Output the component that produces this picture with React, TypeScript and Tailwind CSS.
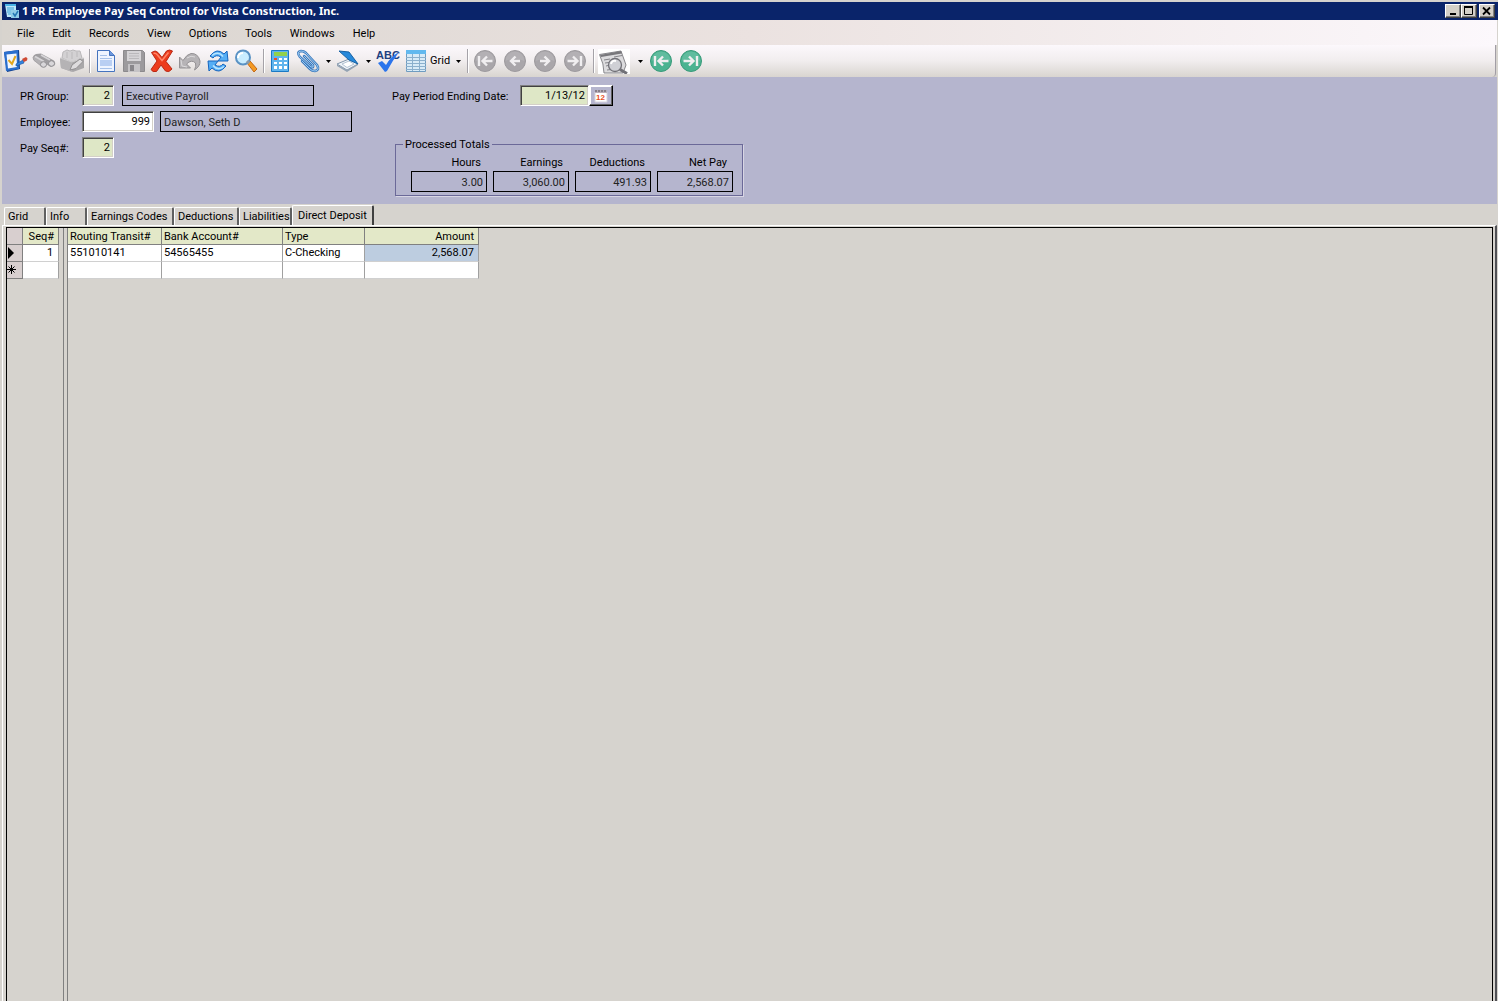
import type { ReactNode } from "react"

const menuItems = ["File", "Edit", "Records", "View", "Options", "Tools", "Windows", "Help"]

const tabs = [
  { name: "Grid", width: "w-[42px]" },
  { name: "Info", width: "w-[41px]" },
  { name: "Earnings Codes", width: "w-[87px]" },
  { name: "Deductions", width: "w-[65px]" },
  { name: "Liabilities", width: "w-[53px]" },
]

const totals = [
  { name: "Hours", value: "3.00" },
  { name: "Earnings", value: "3,060.00" },
  { name: "Deductions", value: "491.93" },
  { name: "Net Pay", value: "2,568.07" },
]

const sunken =
  "h-[21px] border border-t-[#808080] border-l-[#808080] border-r-white border-b-white px-[3px] text-right outline-none shadow-[inset_1px_1px_0_#404040,inset_-1px_-1px_0_#d4d0c8]"
const boxed = "h-[21px] border border-black bg-transparent px-[3px] pt-[2px] text-[#222] outline-none"

function Icon({ children }: { children: ReactNode }) {
  return (
    <svg width="24" height="24" viewBox="0 0 24 24" aria-hidden="true">
      {children}
    </svg>
  )
}

function ToolButton({ label, children }: { label: string; children: ReactNode }) {
  return (
    <button aria-label={label} className="flex h-7 w-7 shrink-0 items-center justify-center">
      <Icon>{children}</Icon>
    </button>
  )
}

function MenuArrow({ label }: { label: string }) {
  return (
    <button aria-label={label} className="flex h-7 w-3 shrink-0 items-center justify-center">
      <svg width="5" height="3" viewBox="0 0 5 3" aria-hidden="true">
        <path d="M0 0h5L2.5 3z" fill="#000" />
      </svg>
    </button>
  )
}

function Separator() {
  return <div className="mr-[1px] ml-[3px] h-6 w-[2px] shrink-0 border-l border-r border-l-[#a5a2a8] border-r-white" />
}

function RoundButton({ label, color, ring, kind }: { label: string; color: string; ring: string; kind: "first" | "prev" | "next" | "last" }) {
  const forward = kind === "next" || kind === "last"
  const bar = kind === "first" || kind === "last"
  return (
    <button aria-label={label} className="flex h-7 w-[30px] shrink-0 items-center justify-center">
      <Icon>
        <circle cx="12" cy="12" r="10.5" fill={color} stroke={ring} />
        <path d="M2.5 12a9.5 9.5 0 0 1 19 0q-9-4-19 0z" fill="#fff" opacity=".12" />
        <g transform={forward ? "translate(24 0) scale(-1 1)" : undefined} fill="none" stroke="#f0eef0" strokeWidth="2.4">
          {bar ? <path d="M19.500 12H10M14 7.500L9.500 12l4.500 4.500M6 7v10" /> : <path d="M17 12H8M12.500 7.500L8 12l4.500 4.500" />}
        </g>
      </Icon>
    </button>
  )
}

function TitleBar() {
  return (
    <header className="flex h-[18px] items-center bg-[#0a246a] pr-[3px] pl-[2px] text-white">
      <svg width="16" height="16" viewBox="0 0 16 16" aria-hidden="true">
        <path d="M1 1h11v13H3z" fill="#bfe6f8" />
        <path d="M1 1h11v2H1z" fill="#4bb3e4" />
        <path d="M3 5h7M3 7h7M3 9h5M4 11h3" stroke="#3a9fd4" />
        <path d="M7 7h8v8H7z" fill="#8fcbe8" />
        <path d="M9 10l2 3 3-5" stroke="#2477b5" strokeWidth="1.5" fill="none" />
      </svg>
      <h1 className="ml-[2px] flex-1 font-['Noto_Sans',sans-serif] text-[11px] leading-4 font-bold whitespace-nowrap">
        1 PR Employee Pay Seq Control for Vista Construction, Inc.
      </h1>
      {["Minimize", "Maximize", "Close"].map((name) => (
        <button
          key={name}
          aria-label={name}
          className="flex h-[14px] w-4 items-center justify-center border border-t-white border-r-[#404040] border-b-[#404040] border-l-white bg-[#d4d0c8] shadow-[inset_-1px_-1px_0_#808080] last:ml-[2px]"
        >
          <svg width="12" height="10" viewBox="0 0 12 10" fill="none" stroke="#000" aria-hidden="true">
            {name === "Minimize" && <path d="M3 8h6" strokeWidth="2" />}
            {name === "Maximize" && (
              <>
                <path d="M1.500 1.500h8v7h-8z" />
                <path d="M1 1h9" strokeWidth="2" />
              </>
            )}
            {name === "Close" && <path d="M2 1.500L9 8.500M9 1.500L2 8.500" strokeWidth="1.800" />}
          </svg>
        </button>
      ))}
    </header>
  )
}

function Toolbar() {
  return (
    <div className="mr-[2px] flex h-8 items-center rounded-b-sm border-r border-[#a19da5] bg-linear-to-b from-[#fcf8fc] via-[#f1edee] to-[#d9d5d0]">
      <ToolButton label="Validate">
        <path d="M0 3l15-2 1 19-13 3z" fill="#0f3f8c" />
        <path d="M0 3l14-2 1 19-13 2z" fill="#2a6fce" />
        <path d="M2.500 5.500l10-1 .5 13.500-9 1.500z" fill="#f2f7fd" />
        <path d="M4.500 11l3.500 4 3.500-8" stroke="#e2a71f" strokeWidth="2" fill="none" />
        <path d="M12 15l7-4 1 3-8 3z" fill="#3184e0" stroke="#174f9b" strokeWidth=".6" />
        <path d="M18 10l4-2 1.500 1.500-.5 2-3 1.500z" fill="#cf4a34" />
      </ToolButton>
      <ToolButton label="Find">
        <path d="M1 9q0-3 3-4l5-.5 12 6.500q3 2 2 5l-4 2-7-4-2 .5z" fill="#a19fa2" />
        <path d="M1 8.500q0 3 3 4.500l5 4q4 2 5-1l1-3-8-5q-4-3-6 .5z" fill="#b3b1b4" stroke="#99979a" strokeWidth=".7" />
        <path d="M3 7.500l9 5M9 6l9 5" stroke="#d6d4d7" strokeWidth="1.500" />
        <ellipse cx="11.500" cy="15.500" rx="3" ry="2.800" fill="#d9d7da" stroke="#8f8d90" />
        <ellipse cx="19.500" cy="14.500" rx="3" ry="2.800" fill="#d9d7da" stroke="#8f8d90" />
      </ToolButton>
      <ToolButton label="Toolbox">
        <path d="M2 9l1-6 4-2 3 1 3-1 3 1 4 0 2 7-10 5z" fill="#d3d1d3" stroke="#b9b7b9" />
        <path d="M7 3v6M12 3v7M17 3v5" stroke="#bbb9bb" />
        <path d="M0 9l12 4 12-4v10l-11 4L1 19z" fill="#a9a7a9" />
        <path d="M0 9l12 4v10L1 19z" fill="#b5b3b5" />
        <path d="M0 9l12 4 12-4" fill="none" stroke="#cdcbcd" />
        <path d="M10 21l2-5 8-6 3 2.500-7 7z" fill="#dedcde" stroke="#929092" />
      </ToolButton>
      <Separator />
      <ToolButton label="New record">
        <path d="M3.500 1.500h12l5 5v16h-17z" fill="#eef4ff" stroke="#4573be" />
        <path d="M15.500 1.500v5h5" fill="#6d98dd" stroke="#4573be" />
        <path d="M6 6.500h7M6 9.500h12" stroke="#a6c1e9" />
        <path d="M6 11h12v6H6z" fill="#b9cff3" />
        <path d="M6 19.500h12" stroke="#a6c1e9" />
      </ToolButton>
      <ToolButton label="Save">
        <path d="M1.500 1.500h19l2 2v19h-21z" fill="#9c9a9d" stroke="#8c8a8d" />
        <path d="M5 2h14v10H5z" fill="#d6d4d7" />
        <path d="M7 4.500h10M7 7h10M7 9.500h10" stroke="#bab8bb" />
        <path d="M6 15h12v8H6z" fill="#c5c3c6" />
        <path d="M8 16h4v6H8z" fill="#88868a" />
      </ToolButton>
      <ToolButton label="Delete">
        <path d="M1.500 3.500q4-3 6.500 0l4 5 4.500-6.500q3-2 6 0L16 12.500l6 7.500q-3 4-6.500 2L11 16l-4.500 6.500q-4 1-5.500-2L7 12z" fill="#ed3c1c" stroke="#b92814" />
        <path d="M3.500 4.500q2-1 3.500 1l5 6 6.500-8" stroke="#ff8467" strokeWidth="1.500" fill="none" />
      </ToolButton>
      <ToolButton label="Undo">
        <path d="M1.500 8v11h11l-4-4q5-5 9-1 1 3-1 7 6-4 5.500-9-2-8-9-7.500-4 .5-8 7z" fill="#b6b3b6" stroke="#949194" />
        <path d="M3 11l1 6 5 1M9 9q4-3 8-1" stroke="#dcdadc" fill="none" />
      </ToolButton>
      <ToolButton label="Refresh">
        <path d="M4 7q7-9 14-2l3-3 1 10H12l3-4q-5-3-8 1z" fill="#55aef5" stroke="#1664bd" />
        <path d="M20 17q-7 9-14 2l-3 3-1-10h10l-3 4q5 3 8-1z" fill="#55aef5" stroke="#1664bd" />
        <path d="M6 6.500q6-5 11 1M18 17.500q-6 5-11-1" stroke="#b9e5ff" strokeWidth="1.500" fill="none" />
      </ToolButton>
      <ToolButton label="Search">
        <path d="M13 14l3-2 7 8-3 3z" fill="#f49a22" stroke="#c26816" />
        <circle cx="9" cy="8.500" r="7" fill="#c9edff" stroke="#5a92c4" strokeWidth="2" />
        <path d="M4 9q0-5 5-5" fill="none" stroke="#fff" strokeWidth="2" />
        <path d="M13 14l2-2" stroke="#8c9aa8" strokeWidth="3" />
      </ToolButton>
      <Separator />
      <ToolButton label="Calculator">
        <path d="M3.500 1.500h17v21h-17z" fill="#5fb4ed" stroke="#1b79c4" />
        <path d="M6 3h13v4H6z" fill="#91d14b" />
        <path d="M6 9h3v2H6z" fill="#ed4b27" />
        <path d="M11 9h3v2h-3zM16 9h3v2h-3zM6 13h3v2H6zM11 13h3v2h-3zM16 13h3v2h-3zM6 17h3v3H6zM11 17h3v3h-3zM16 17h3v3h-3z" fill="#fff" />
      </ToolButton>
      <ToolButton label="Attachments">
        <g fill="none" strokeLinecap="round">
          <path d="M8 7l9 9q1 3-2 2L4 8Q0 3 5 2q3 0 5 2l11 12q3 5-2 6-3 0-5-2L6 12" stroke="#3c79bd" strokeWidth="2.500" />
          <path d="M8 7l9 9q1 3-2 2L4 8Q0 3 5 2q3 0 5 2l11 12q3 5-2 6-3 0-5-2L6 12" stroke="#a5d2f6" strokeWidth=".9" />
        </g>
      </ToolButton>
      <MenuArrow label="Attachment options" />
      <ToolButton label="Scanner">
        <path d="M1 15l12-5 9 5-11 6z" fill="#eef3f8" stroke="#8498ad" />
        <path d="M6 15l7-3 5 3-7 3.500z" fill="#fff" stroke="#b4c3d3" />
        <path d="M1 15.500V17l10 6 11-7v-1.500L11 21z" fill="#94a3b3" />
        <path d="M3 2l10 1 9 12-9-4z" fill="#2689db" stroke="#1762a5" />
      </ToolButton>
      <MenuArrow label="Scanner options" />
      <button aria-label="Spelling" className="h-7 w-7 shrink-0">
        <svg width="28" height="28" viewBox="0 0 28 28" aria-hidden="true">
          <text x="2" y="12" fill="#1f4180" fontFamily="Liberation Sans, sans-serif" fontSize="11" fontWeight="bold">ABC</text>
          <path d="M4 16l4-2 4 4q5-9 13-13-6 8-12 19l-2 1z" fill="#2b75ec" />
        </svg>
      </button>
      <button className="ml-[2px] flex h-7 shrink-0 items-center gap-[2px] pr-[2px]">
        <Icon>
          <path d="M2.500 1.500h19v21h-19z" fill="#d8ebf7" stroke="#6f9cc0" />
          <path d="M2 1h20v4H2z" fill="#62b9ef" />
          <path d="M2 8.500h20M2 11.500h20M2 14.500h20M2 17.500h20M2 20.500h20M8.500 5v17M15.500 5v17" stroke="#8bb0cd" />
        </Icon>
        Grid
      </button>
      <MenuArrow label="Grid options" />
      <Separator />
      <RoundButton label="First record" kind="first" color="#a9a6aa" ring="#9d9a9e" />
      <RoundButton label="Previous record" kind="prev" color="#a9a6aa" ring="#9d9a9e" />
      <RoundButton label="Next record" kind="next" color="#a9a6aa" ring="#9d9a9e" />
      <RoundButton label="Last record" kind="last" color="#a9a6aa" ring="#9d9a9e" />
      <Separator />
      <button aria-label="Preview" className="mr-1 ml-[2px] h-[25px] w-8 shrink-0 bg-white">
        <svg width="32" height="25" viewBox="0 0 32 25" aria-hidden="true">
          <path d="M1.500 5.500L23 2l5 14-3 8H6q0-9-4.500-18.500z" fill="#dcdcde" stroke="#87878b" />
          <path d="M2 6l21-4 1 2.500L3 8z" fill="#77777b" />
          <path d="M6 11l6-1M7 14l4-.5M8 17l2-.5M16 8l8-1.500M9 21l4-.5" stroke="#85858a" />
          <circle cx="17" cy="16" r="6.500" fill="#cfd0d5" stroke="#717177" strokeWidth="1.300" />
          <path d="M13 15q1-4 5-3" fill="none" stroke="#fff" strokeWidth="2" />
          <path d="M22 20.500l7 4" stroke="#717177" strokeWidth="3" />
        </svg>
      </button>
      <MenuArrow label="Preview options" />
      <RoundButton label="First batch" kind="first" color="#4bb391" ring="#389a79" />
      <RoundButton label="Last batch" kind="last" color="#4bb391" ring="#389a79" />
    </div>
  )
}

function RecordHeader() {
  return (
    <section className="mr-[1px] flex h-[127px] items-start bg-[#b5b5ce] pt-2 pl-[18px]">
      <div className="flex w-[372px] flex-col gap-[5px]">
        <div className="flex items-center">
          <label htmlFor="group" className="w-[62px] pt-[2px]">PR Group:</label>
          <input id="group" defaultValue="2" className={`${sunken} w-8 bg-[#dee7c6]`} />
          <input aria-label="PR Group name" readOnly value="Executive Payroll" className={`${boxed} ml-2 w-48`} />
        </div>
        <div className="flex items-center">
          <label htmlFor="employee" className="w-[62px] pt-[2px]">Employee:</label>
          <input id="employee" defaultValue="999" className={`${sunken} w-[72px] bg-white`} />
          <input aria-label="Employee name" readOnly value="Dawson, Seth D" className={`${boxed} ml-[6px] w-48`} />
        </div>
        <div className="flex items-center">
          <label htmlFor="seq" className="w-[62px] pt-[2px]">Pay Seq#:</label>
          <input id="seq" defaultValue="2" className={`${sunken} w-8 bg-[#dee7c6]`} />
        </div>
      </div>
      <div>
        <div className="flex items-center">
          <label htmlFor="ending" className="w-32 pt-[2px]">Pay Period Ending Date:</label>
          <input id="ending" defaultValue="1/13/12" className={`${sunken} w-[69px] bg-[#dee7c6]`} />
          <button
            aria-label="Pick date"
            className="flex h-[21px] w-6 items-center justify-center border border-t-white border-r-black border-b-black border-l-white shadow-[inset_-1px_-1px_0_#606060,inset_1px_1px_0_#fff]"
          >
            <svg width="14" height="14" viewBox="0 0 14 14" aria-hidden="true">
              <path d="M1 3h12v10H1z" fill="#fff" stroke="#d5d2dc" />
              <path d="M1 1h12v3H1z" fill="#b9aeb8" />
              <path d="M2 1v2M5 1v2M8 1v2M11 1v2" stroke="#55505c" />
              <text x="2" y="11" fill="#e8501f" fontFamily="Liberation Sans, sans-serif" fontSize="8" fontWeight="bold">12</text>
            </svg>
          </button>
        </div>
        <fieldset className="mt-[31px] ml-[3px] h-[59px] w-[348px] border border-[#6b6998] pr-[9px] pl-[15px] shadow-[1px_1px_0_#d8d6e4]">
          <legend className="-ml-2 px-[2px] pt-[1px] leading-[13px]">Processed Totals</legend>
          <div className="flex gap-[6px] pt-1">
            {totals.map((total) => (
              <label key={total.name} className="flex w-[76px] flex-col text-right">
                <span className="pr-[6px] leading-4">{total.name}</span>
                <input readOnly value={total.value} className={`${boxed} w-full text-right`} />
              </label>
            ))}
          </div>
        </fieldset>
      </div>
    </section>
  )
}

function TabStrip() {
  return (
    <div role="tablist" className="mt-[1px] flex h-5 items-end pl-[2px]">
      {tabs.map((tab) => (
        <button
          key={tab.name}
          role="tab"
          aria-selected="false"
          className={`${tab.width} h-[18px] shrink-0 rounded-t-xs border-t border-r-2 border-l border-t-white border-r-[#606060] border-l-white pt-[1px] pl-[3px] text-left whitespace-nowrap last:border-r`}
        >
          {tab.name}
        </button>
      ))}
      <button
        role="tab"
        aria-selected="true"
        className="h-5 w-[82px] shrink-0 rounded-t-xs border-t border-r-2 border-l border-t-white border-r-[#404040] border-l-white pl-[5px] text-left whitespace-nowrap"
      >
        Direct Deposit
      </button>
    </div>
  )
}

const head = "h-[17px] border-r border-b border-[#808080] bg-[#e3e8c8] px-[2px] pt-[2px] leading-[14px] font-normal"
const cell = "h-[17px] border-r border-b border-r-[#a0a0a0] border-b-[#d0d0d0] bg-white px-[2px]"
const marker = "h-[17px] border-r border-b border-[#808080] bg-[#d8cfcf] p-0"

function DepositGrid() {
  return (
    <div className="mr-[2px] ml-[3px] flex flex-1 border-t border-r border-l border-black pr-1">
      <table className="h-[51px] w-[52px] table-fixed border-separate border-spacing-0 leading-4">
        <thead>
          <tr>
            <th aria-label="Row" className={`${marker} w-4`} />
            <th className={`${head} pr-[4px] text-right`}>Seq#</th>
          </tr>
        </thead>
        <tbody>
          <tr>
            <td className={marker}>
              <svg width="7" height="12" viewBox="0 0 7 12" className="ml-[1px]" aria-hidden="true">
                <path d="M0 0l6 6-6 6z" />
              </svg>
            </td>
            <td className={`${cell} text-right`}>1&nbsp;</td>
          </tr>
          <tr>
            <td className={marker}>
              <svg width="10" height="10" viewBox="0 0 10 10" stroke="#000" aria-hidden="true">
                <path d="M4.500 0v9M0 4.500h9M1.500 1.500l6 6M7.500 1.500l-6 6" />
              </svg>
            </td>
            <td className={cell} />
          </tr>
        </tbody>
      </table>
      <div className="ml-1 w-[5px] border-x border-[#808080]" />
      <table className="h-[51px] w-[411px] table-fixed border-separate border-spacing-0 text-left leading-4">
        <thead>
          <tr>
            <th className={`${head} w-[94px]`}>Routing Transit#</th>
            <th className={`${head} w-[121px]`}>Bank Account#</th>
            <th className={`${head} w-[82px]`}>Type</th>
            <th className={`${head} pr-1 text-right`}>Amount</th>
          </tr>
        </thead>
        <tbody>
          <tr>
            <td className={cell}>551010141</td>
            <td className={cell}>54565455</td>
            <td className={cell}>C-Checking</td>
            <td className="h-[17px] border-r border-b border-r-[#a0a0a0] border-b-[#d0d0d0] bg-[#bdcde0] pr-1 text-right">2,568.07</td>
          </tr>
          <tr>
            <td className={cell} />
            <td className={cell} />
            <td className={cell} />
            <td className={cell} />
          </tr>
        </tbody>
      </table>
    </div>
  )
}

export default function App() {
  return (
    <div className="flex min-h-screen flex-col bg-[#d6d3ce] pt-[2px] pl-[2px] font-[Roboto,sans-serif] text-[11px] leading-4 text-black">
      <TitleBar />
      <nav className="mr-[1px] flex h-[25px] items-center gap-[18px] bg-linear-to-r from-[#d8d4ce] via-[#ebe2e0] to-[#fcf8fc] pt-[2px] pl-[15px]">
        {menuItems.map((item) => (
          <button key={item}>{item}</button>
        ))}
      </nav>
      <Toolbar />
      <RecordHeader />
      <TabStrip />
      <main className="mr-[1px] flex flex-1 flex-col border-t border-r-2 border-l border-t-white border-r-[#505055] border-l-white pt-[1px]">
        <DepositGrid />
      </main>
    </div>
  )
}
